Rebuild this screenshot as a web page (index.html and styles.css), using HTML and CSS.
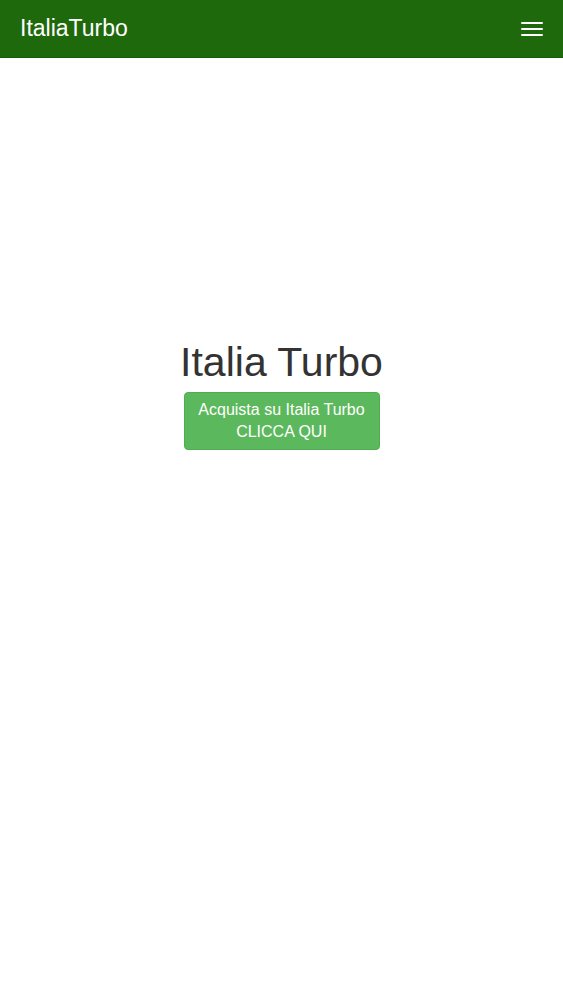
FILE: index.html
```html
<!DOCTYPE html>
<html lang="it">
  <head>
    <meta charset="UTF-8" />
    <meta name="viewport" content="width=device-width, initial-scale=1.0" />
    <title>ItaliaTurbo</title>
    <link rel="stylesheet" href="styles.css">
  </head>
  <body>
    <nav class="navbar">
      <a class="brand" href="#">ItaliaTurbo</a>
      <button class="toggle" aria-label="Menu">
        <span class="bar"></span>
        <span class="bar"></span>
        <span class="bar"></span>
      </button>
    </nav>

    <div class="hero">
      <h1>Italia Turbo</h1>
      <a class="btn-buy" href="#">Acquista su Italia Turbo<br>CLICCA QUI</a>
    </div>
  </body>
</html>
```

FILE: styles.css
```css
body {
  font-family: "Liberation Sans", Arial, sans-serif;
  background-color: #fff;
  margin: 0;
  padding: 0;
}
.navbar {
  background-color: #1f690d;
  height: 58px;
  display: flex;
  align-items: center;
  justify-content: space-between;
  padding: 0 20px;
  border-bottom: 1px solid #1a5a0b;
  box-sizing: border-box;
}
.brand {
  color: #fff;
  font-size: 23px;
  text-decoration: none;
}
.toggle {
  background: none;
  border: none;
  padding: 0;
  width: 22px;
  display: flex;
  flex-direction: column;
  gap: 4px;
  cursor: pointer;
}
.bar {
  display: block;
  height: 2px;
  background-color: #fff;
  border-radius: 1px;
}
.hero {
  text-align: center;
  padding-top: 281px;
}
.hero h1 {
  font-size: 41px;
  font-weight: normal;
  color: #333;
  margin: 0 0 7px;
  line-height: 46px;
}
.btn-buy {
  display: inline-block;
  background-color: #5cb85c;
  border: 1px solid #4cae4c;
  border-radius: 4px;
  color: #fff;
  font-size: 16px;
  line-height: 22px;
  padding: 6px 12px;
  text-decoration: none;
  width: 170px;
}
```
